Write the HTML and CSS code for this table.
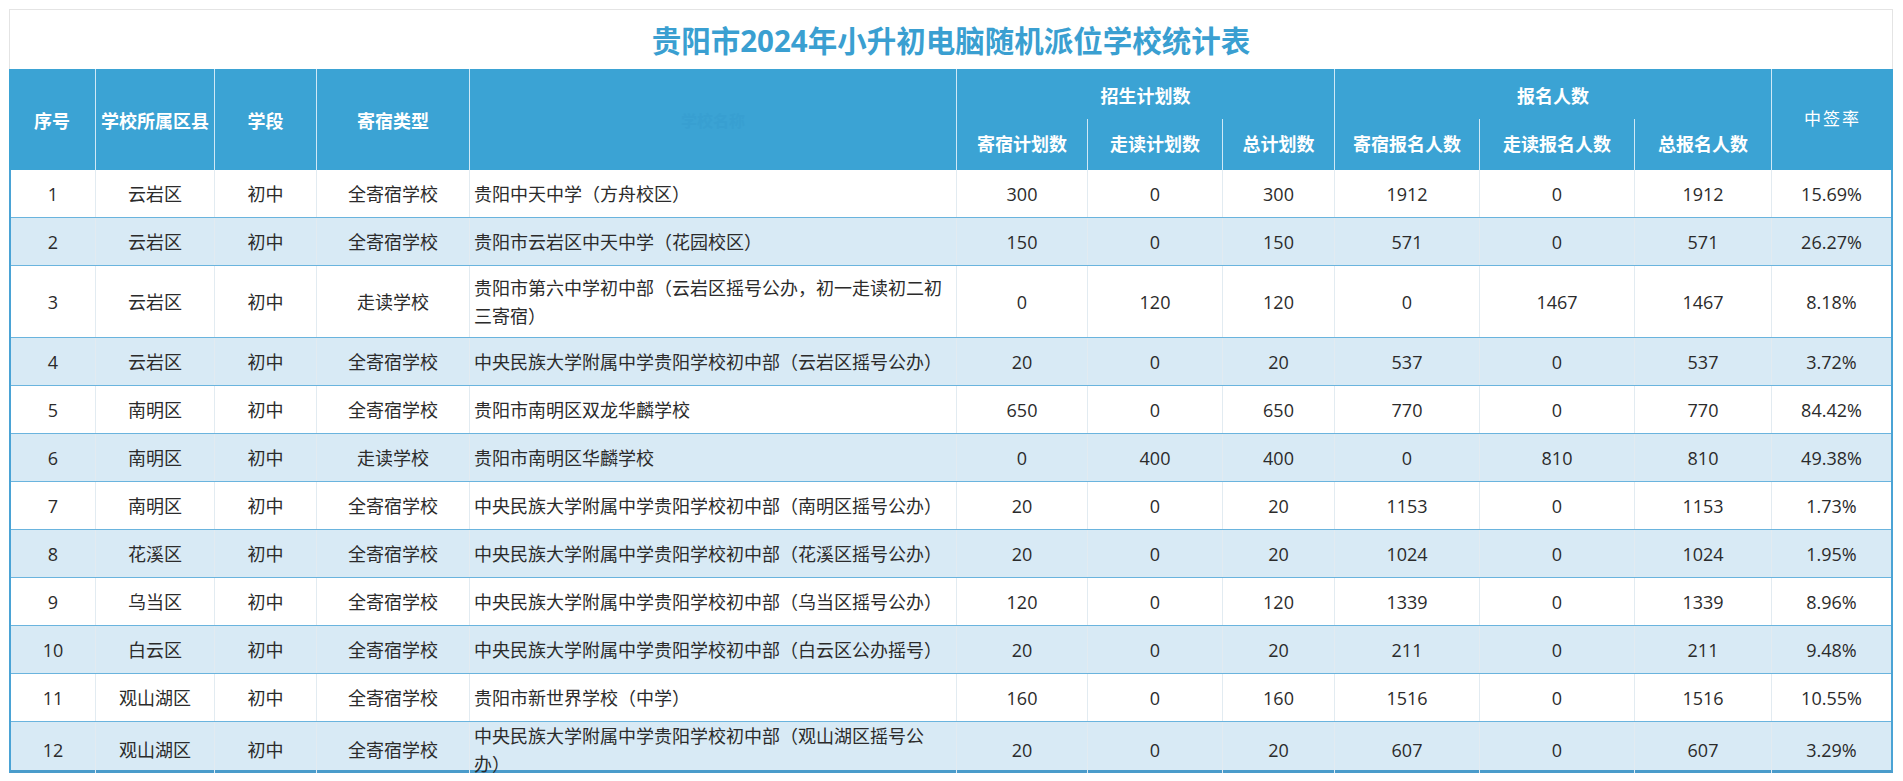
FILE: index.html
```html
<!DOCTYPE html>
<html lang="zh-CN">
<head>
<meta charset="utf-8">
<title>贵阳市2024年小升初电脑随机派位学校统计表</title>
<link rel="stylesheet" href="styles.css">
</head>
<body>
<div class="page">
  <div class="title">贵阳市2024年小升初电脑随机派位学校统计表</div>
  <div class="thead">
    <div class="th span2 c1">序号</div>
    <div class="th span2 c2">学校所属区县</div>
    <div class="th span2 c3">学段</div>
    <div class="th span2 c4">寄宿类型</div>
    <div class="th span2 c5"><span class="ghost">学校名称</span></div>
    <div class="th group g1">招生计划数</div>
    <div class="th group g2">报名人数</div>
    <div class="th span2 c12 rate">中签率</div>
    <div class="th sub s6">寄宿计划数</div>
    <div class="th sub s7">走读计划数</div>
    <div class="th sub s8">总计划数</div>
    <div class="th sub s9">寄宿报名人数</div>
    <div class="th sub s10">走读报名人数</div>
    <div class="th sub s11">总报名人数</div>
  </div>
  <div class="tbody">
    <div class="row"><div class="td">1</div><div class="td">云岩区</div><div class="td">初中</div><div class="td">全寄宿学校</div><div class="td name">贵阳中天中学（方舟校区）</div><div class="td">300</div><div class="td">0</div><div class="td">300</div><div class="td">1912</div><div class="td">0</div><div class="td">1912</div><div class="td">15.69%</div></div>
    <div class="row alt"><div class="td">2</div><div class="td">云岩区</div><div class="td">初中</div><div class="td">全寄宿学校</div><div class="td name">贵阳市云岩区中天中学（花园校区）</div><div class="td">150</div><div class="td">0</div><div class="td">150</div><div class="td">571</div><div class="td">0</div><div class="td">571</div><div class="td">26.27%</div></div>
    <div class="row tall"><div class="td">3</div><div class="td">云岩区</div><div class="td">初中</div><div class="td">走读学校</div><div class="td name">贵阳市第六中学初中部（云岩区摇号公办，初一走读初二初三寄宿）</div><div class="td">0</div><div class="td">120</div><div class="td">120</div><div class="td">0</div><div class="td">1467</div><div class="td">1467</div><div class="td">8.18%</div></div>
    <div class="row alt"><div class="td">4</div><div class="td">云岩区</div><div class="td">初中</div><div class="td">全寄宿学校</div><div class="td name">中央民族大学附属中学贵阳学校初中部（云岩区摇号公办）</div><div class="td">20</div><div class="td">0</div><div class="td">20</div><div class="td">537</div><div class="td">0</div><div class="td">537</div><div class="td">3.72%</div></div>
    <div class="row"><div class="td">5</div><div class="td">南明区</div><div class="td">初中</div><div class="td">全寄宿学校</div><div class="td name">贵阳市南明区双龙华麟学校</div><div class="td">650</div><div class="td">0</div><div class="td">650</div><div class="td">770</div><div class="td">0</div><div class="td">770</div><div class="td">84.42%</div></div>
    <div class="row alt"><div class="td">6</div><div class="td">南明区</div><div class="td">初中</div><div class="td">走读学校</div><div class="td name">贵阳市南明区华麟学校</div><div class="td">0</div><div class="td">400</div><div class="td">400</div><div class="td">0</div><div class="td">810</div><div class="td">810</div><div class="td">49.38%</div></div>
    <div class="row"><div class="td">7</div><div class="td">南明区</div><div class="td">初中</div><div class="td">全寄宿学校</div><div class="td name">中央民族大学附属中学贵阳学校初中部（南明区摇号公办）</div><div class="td">20</div><div class="td">0</div><div class="td">20</div><div class="td">1153</div><div class="td">0</div><div class="td">1153</div><div class="td">1.73%</div></div>
    <div class="row alt"><div class="td">8</div><div class="td">花溪区</div><div class="td">初中</div><div class="td">全寄宿学校</div><div class="td name">中央民族大学附属中学贵阳学校初中部（花溪区摇号公办）</div><div class="td">20</div><div class="td">0</div><div class="td">20</div><div class="td">1024</div><div class="td">0</div><div class="td">1024</div><div class="td">1.95%</div></div>
    <div class="row"><div class="td">9</div><div class="td">乌当区</div><div class="td">初中</div><div class="td">全寄宿学校</div><div class="td name">中央民族大学附属中学贵阳学校初中部（乌当区摇号公办）</div><div class="td">120</div><div class="td">0</div><div class="td">120</div><div class="td">1339</div><div class="td">0</div><div class="td">1339</div><div class="td">8.96%</div></div>
    <div class="row alt"><div class="td">10</div><div class="td">白云区</div><div class="td">初中</div><div class="td">全寄宿学校</div><div class="td name">中央民族大学附属中学贵阳学校初中部（白云区公办摇号）</div><div class="td">20</div><div class="td">0</div><div class="td">20</div><div class="td">211</div><div class="td">0</div><div class="td">211</div><div class="td">9.48%</div></div>
    <div class="row"><div class="td">11</div><div class="td">观山湖区</div><div class="td">初中</div><div class="td">全寄宿学校</div><div class="td name">贵阳市新世界学校（中学）</div><div class="td">160</div><div class="td">0</div><div class="td">160</div><div class="td">1516</div><div class="td">0</div><div class="td">1516</div><div class="td">10.55%</div></div>
    <div class="row alt last"><div class="td">12</div><div class="td">观山湖区</div><div class="td">初中</div><div class="td">全寄宿学校</div><div class="td name">中央民族大学附属中学贵阳学校初中部（观山湖区摇号公办）</div><div class="td">20</div><div class="td">0</div><div class="td">20</div><div class="td">607</div><div class="td">0</div><div class="td">607</div><div class="td">3.29%</div></div>
  </div>
</div>
</body>
</html>
```
FILE: styles.css
```css
html, body {
  margin: 0;
  padding: 0;
  background: #ffffff;
}

.page {
  padding: 9px 0 0 9px;
  width: 1884px;
  font-family: "Open Sans", "Noto Sans CJK SC", sans-serif;
  color: #2b2b2b;
}

.title {
  box-sizing: border-box;
  height: 60px;
  border: 1px solid #e4e4e4;
  border-bottom: none;
  text-align: center;
  font-family: "Open Sans", "Noto Sans CJK SC", sans-serif;
  font-weight: 700;
  font-size: 29.5px;
  line-height: 62px;
  color: #3a9fd1;
}

.thead {
  display: grid;
  grid-template-columns: 87px 119px 102px 153px 487px 131px 135px 112px 145px 155px 137px 121px;
  grid-template-rows: 50px 51px;
  background: #3ba3d4;
}

.th {
  display: flex;
  align-items: center;
  justify-content: center;
  color: #ffffff;
  font-family: "Noto Sans CJK SC", sans-serif;
  font-weight: 700;
  font-size: 18px;
  border-right: 1px solid #cfe8f6;
  box-sizing: border-box;
}

.th.span2 { grid-row: 1 / 3; }
.c1 { grid-column: 1; }
.c2 { grid-column: 2; }
.c3 { grid-column: 3; }
.c4 { grid-column: 4; }
.c5 { grid-column: 5; }
.c12 { grid-column: 12; border-right: none; }
.g1 { grid-column: 6 / 9; grid-row: 1; padding-top: 2px; }
.g2 { grid-column: 9 / 12; grid-row: 1; padding-top: 2px; }
.th.sub { grid-row: 2; padding-bottom: 4px; }
.s6 { grid-column: 6; }
.s7 { grid-column: 7; }
.s8 { grid-column: 8; }
.s9 { grid-column: 9; }
.s10 { grid-column: 10; }
.s11 { grid-column: 11; }

.th.rate {
  font-weight: 400;
  font-size: 17px;
  letter-spacing: 2px;
  padding-bottom: 4px;
}

.ghost {
  color: #389fd1;
  font-size: 16px;
}

.tbody {
  box-sizing: border-box;
  width: 1884px;
  border-left: 2px solid #4aa3d5;
  border-right: 2px solid #4aa3d5;
  border-bottom: 3px solid #4a9ccb;
}

.row {
  display: grid;
  grid-template-columns: 85px 119px 102px 153px 487px 131px 135px 112px 145px 155px 137px 119px;
  height: 48px;
  box-sizing: border-box;
  border-bottom: 1px solid #6ab4de;
  background: #ffffff;
}

.row.alt { background: #d8eaf5; }
.row.tall { height: 72px; }
.row.last { border-bottom: none; }

.td {
  display: flex;
  align-items: center;
  justify-content: center;
  font-size: 18px;
  line-height: 28px;
  border-right: 1px solid #e2ebf1;
  box-sizing: border-box;
  min-width: 0;
}

.td:last-child { border-right: none; }

.td.name {
  justify-content: flex-start;
  text-align: left;
  padding: 0 12px 0 4px;
}
```
